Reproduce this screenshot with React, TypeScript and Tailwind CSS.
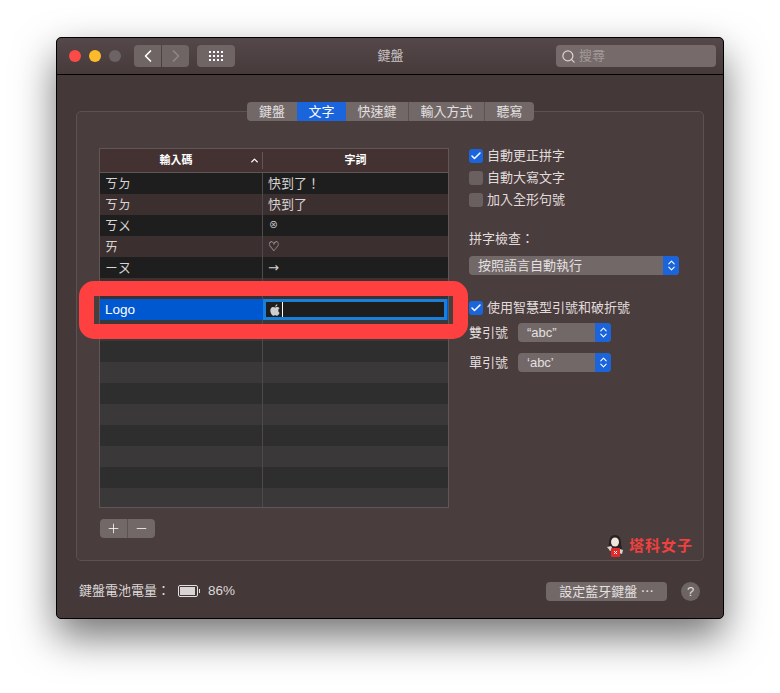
import { Check, ChevronUp, ChevronLeft, ChevronRight, ChevronsUpDown, Search, Plus, Minus } from 'lucide-react';

const FONT = '"Liberation Sans", "Noto Sans CJK TC", sans-serif';

const TABS = [
  { label: '鍵盤', width: 'w-[50px]' },
  { label: '文字', width: 'w-[49px]' },
  { label: '快速鍵', width: 'w-[62px]' },
  { label: '輸入方式', width: 'w-[76px]' },
  { label: '聽寫', width: 'w-[50px]' },
];

const ENTRIES = [
  { code: 'ㄎㄉ', word: '快到了！', symbol: '' },
  { code: 'ㄎㄉ', word: '快到了', symbol: '' },
  { code: 'ㄎㄨ', word: '⊗', symbol: 'text-[9px] pl-[6px]' },
  { code: 'ㄞ', word: '♡', symbol: 'font-["DejaVu_Sans"] font-bold text-[#eeeaea]' },
  { code: 'ㄧㄡ', word: '→', symbol: 'font-["DejaVu_Sans"]' },
];

function Checkbox({ label, checked = false }: { label: string; checked?: boolean }) {
  return (
    <div className="flex items-center gap-[4px] h-[22px] text-[13px] text-[#e0dcdc]">
      <span
        className={`w-[14px] h-[14px] rounded-[3px] flex items-center justify-center ${
          checked ? 'bg-[#1a64dc]' : 'bg-[#6b6060]'
        }`}
      >
        {checked && <Check size={12} strokeWidth={3} className="text-white" />}
      </span>
      {label}
    </div>
  );
}

function Select({ value, width }: { value: string; width: string }) {
  return (
    <div className={`flex h-[19px] rounded-[4px] overflow-hidden bg-[#726868] text-[13px] text-[#e4e0e0] ${width}`}>
      <span className="flex-1 pl-[9px] leading-[19px] whitespace-nowrap">{value}</span>
      <span className="w-[16px] bg-[#1a64dc] flex items-center justify-center">
        <ChevronsUpDown size={13} className="text-white" />
      </span>
    </div>
  );
}

function EmptyRow({ shade }: { shade: string }) {
  return (
    <div className={`flex h-[21px] ${shade}`}>
      <div className="w-[163px] border-r border-[#4f4a4a]" />
    </div>
  );
}

export default function App() {
  return (
    <div
      className="w-[780px] h-[693px] pl-[56px] pt-[37px] bg-white overflow-hidden"
      style={{ fontFamily: FONT }}
    >
      <div className="relative w-[668px] h-[582px] rounded-[5px] border border-black bg-[#443838] shadow-[0_18px_40px_rgba(0,0,0,0.55)] flex flex-col">
        {/* title bar */}
        <div className="relative h-[37px] shrink-0 flex items-center pl-[12px] pr-[7px] border-b border-black bg-gradient-to-b from-[#54484a] to-[#463a3b] rounded-t-[5px]">
          <span className="w-[12px] h-[12px] rounded-full bg-[#fc4a46]" />
          <span className="w-[12px] h-[12px] rounded-full bg-[#fdbb2b] ml-[8px]" />
          <span className="w-[12px] h-[12px] rounded-full bg-[#6c6363] ml-[8px]" />
          <div className="flex ml-[13px] gap-[1px]">
            <span className="w-[27px] h-[22px] rounded-l-[4px] bg-[#6f6565] flex items-center justify-center">
              <ChevronLeft size={20} className="text-white" />
            </span>
            <span className="w-[27px] h-[22px] rounded-r-[4px] bg-[#6f6565] flex items-center justify-center">
              <ChevronRight size={20} className="text-[#8f8787]" />
            </span>
          </div>
          <span className="ml-[8px] w-[38px] h-[22px] rounded-[4px] bg-[#6f6565] grid grid-cols-[repeat(4,2px)] auto-rows-[2px] gap-[2px] content-center justify-center">
            {Array.from({ length: 12 }).map((_, i) => (
              <span key={i} className="w-[2px] h-[2px] bg-white" />
            ))}
          </span>
          <span className="flex-1 text-center text-[13px] text-[#c9c3c3] pr-[10px]">鍵盤</span>
          <div className="w-[160px] h-[22px] rounded-[4px] bg-[#766a6a] flex items-center pl-[5px] gap-[3px] text-[13px] text-[#a39b9b]">
            <Search size={15} className="text-[#d8d4d4]" />
            搜尋
          </div>
        </div>

        {/* tab panel */}
        <div className="relative mt-[36px] mx-[19px] w-[628px] h-[450px] rounded-[5px] border border-[#5d5252] bg-[#4a3d3d] flex pt-[36px] pl-[22px]">
          <div className="absolute -top-[10px] left-[170px] flex h-[19px] rounded-[4px] overflow-hidden bg-[#726868] text-[13px] leading-[19px] text-[#e4e0e0]">
            {TABS.map((tab, i) => (
              <span
                key={tab.label}
                className={`text-center ${tab.width} ${i > 2 ? 'border-l border-[#5d5353]' : ''} ${
                  tab.label === '文字' ? 'bg-[#1a64dc] text-white' : ''
                }`}
              >
                {tab.label}
              </span>
            ))}
          </div>

          {/* text replacement table */}
          <div className="flex flex-col w-[350px]">
            <div className="w-[350px] h-[360px] border border-[#5f5656] text-[13px] overflow-hidden">
              <div className="flex items-center h-[24px] bg-[#443232] border-b border-[#5f5656] text-[11px] font-bold text-white">
                <div className="relative w-[162px] pr-[10px] text-center">
                  輸入碼
                  <ChevronUp size={11} strokeWidth={3} className="absolute right-[2px] top-[3px]" />
                </div>
                <span className="w-[1px] h-[17px] bg-[#5f5656]" />
                <div className="flex-1 text-center">字詞</div>
              </div>
              {ENTRIES.map((entry, i) => (
                <div
                  key={i}
                  className={`flex h-[21px] leading-[21px] text-[#d8d4d4] ${i % 2 ? 'bg-[#3c2f2f]' : 'bg-[#1e1e1e]'}`}
                >
                  <div className="w-[163px] pl-[5px] border-r border-[#4f4a4a]">{entry.code}</div>
                  <div className={`pl-[5px] ${entry.symbol}`}>{entry.word}</div>
                </div>
              ))}
              <EmptyRow shade="bg-[#3c3030]" />
              <div className="flex h-[21px] bg-[#0058d0] leading-[21px] text-white">
                <div className="w-[163px] pl-[5px] text-[13.5px]">Logo</div>
                <div className="flex-1 border-[3px] border-[#1a7fd8] bg-[#1e1e1e] flex items-center pl-[2px] mr-[1px]">
                  <svg width="14" height="14" viewBox="0 0 24 24" fill="#cfcfcf">
                    <path d="M17.6 12.7c0-2.6 2.1-3.8 2.2-3.9-1.2-1.8-3.1-2-3.7-2-1.6-.2-3.1.9-3.9.9s-2-.9-3.3-.9c-1.7 0-3.3 1-4.1 2.5-1.8 3-.5 7.6 1.2 10 .8 1.2 1.8 2.5 3.1 2.5s1.7-.8 3.2-.8 1.9.8 3.2.8 2.2-1.2 3-2.4c1-1.4 1.3-2.7 1.4-2.8-.1 0-2.3-.9-2.3-3.9zM15.1 5.3c.7-.8 1.1-1.9 1-3-1 0-2.1.6-2.8 1.4-.6.7-1.2 1.8-1 2.9 1.1.1 2.1-.5 2.8-1.3z" />
                  </svg>
                  <span className="w-[1px] h-[15px] bg-white" />
                </div>
              </div>
              {Array.from({ length: 9 }).map((_, i) => (
                <EmptyRow key={i} shade={i % 2 ? 'bg-[#2e2e2e]' : 'bg-[#3a3838]'} />
              ))}
            </div>
            <div className="flex mt-[11px] ml-[1px] w-[55px] h-[19px] rounded-[4px] overflow-hidden bg-[#726868] text-white">
              <span className="w-[28px] flex items-center justify-center border-r border-[#5d5353]">
                <Plus size={15} strokeWidth={1.25} />
              </span>
              <span className="flex-1 flex items-center justify-center">
                <Minus size={15} strokeWidth={1.25} />
              </span>
            </div>
          </div>

          {/* options column */}
          <div className="ml-[20px] flex flex-col -mt-[3px]">
            <Checkbox label="自動更正拼字" checked />
            <Checkbox label="自動大寫文字" />
            <Checkbox label="加入全形句號" />
            <div className="mt-[19px] text-[13px] text-[#e0dcdc] leading-[18px]">拼字檢查：</div>
            <div className="mt-[8px]">
              <Select value="按照語言自動執行" width="w-[210px]" />
            </div>
            <div className="mt-[22px]">
              <Checkbox label="使用智慧型引號和破折號" checked />
            </div>
            <div className="flex items-center mt-[4px] gap-[10px] text-[13px] text-[#e0dcdc]">
              雙引號
              <Select value="“abc”" width="w-[93px]" />
            </div>
            <div className="flex items-center mt-[10px] gap-[10px] text-[13px] text-[#e0dcdc]">
              單引號
              <Select value="‘abc’" width="w-[93px]" />
            </div>
          </div>

          <div className="absolute right-[10px] bottom-[2px] flex items-center gap-[5px] text-[15px] font-bold text-[#f04040]">
            <svg width="18" height="24" viewBox="0 0 18 24">
              <path d="M3 9c0-5 2-8 6-8s6 3 6 8l1 7H2z" fill="#2a2222" />
              <ellipse cx="9" cy="8" rx="4" ry="4.5" fill="#efe6e0" />
              <path d="M1 13l4-1 2 3-3 2z" fill="#d8d2ce" />
              <path d="M14 15l3 1-1 4-3-1z" fill="#d8d2ce" />
              <rect x="5" y="14" width="9" height="9" rx="1" fill="#e02a2a" />
              <path d="M8 17l3 3M11 17l-3 3" stroke="#fff" />
            </svg>
            <span className="tracking-[1px]">塔科女子</span>
          </div>
        </div>

        {/* footer */}
        <div className="flex items-center mt-[20px] pl-[22px] pr-[23px] text-[13px] text-[#ddd8d8]">
          <span>鍵盤電池電量：</span>
          <span className="ml-[8px] w-[20px] h-[12px] border border-[#e4e0e0] rounded-[2px] p-[1px]">
            <span className="block h-full w-[92%] bg-[#d8d4d4]" />
          </span>
          <span className="w-[1px] h-[4px] bg-[#e4e0e0] ml-[1px]" />
          <span className="ml-[8px] text-[13.5px]">86%</span>
          <div className="flex-1" />
          <span className="w-[121px] h-[19px] rounded-[4px] bg-[#726868] text-center leading-[19px] text-[#e4e0e0]">
            設定藍牙鍵盤 ⋯
          </span>
          <span className="ml-[14px] w-[19px] h-[19px] rounded-full bg-[#6e6464] text-center leading-[19px] text-[#e4e0e0]">
            ?
          </span>
        </div>

        {/* red highlight around the selected row */}
        <div className="absolute left-[22px] top-[243px] w-[389px] h-[58px] rounded-[15px] border-[15px] border-[#ff4040]" />
      </div>
    </div>
  );
}
